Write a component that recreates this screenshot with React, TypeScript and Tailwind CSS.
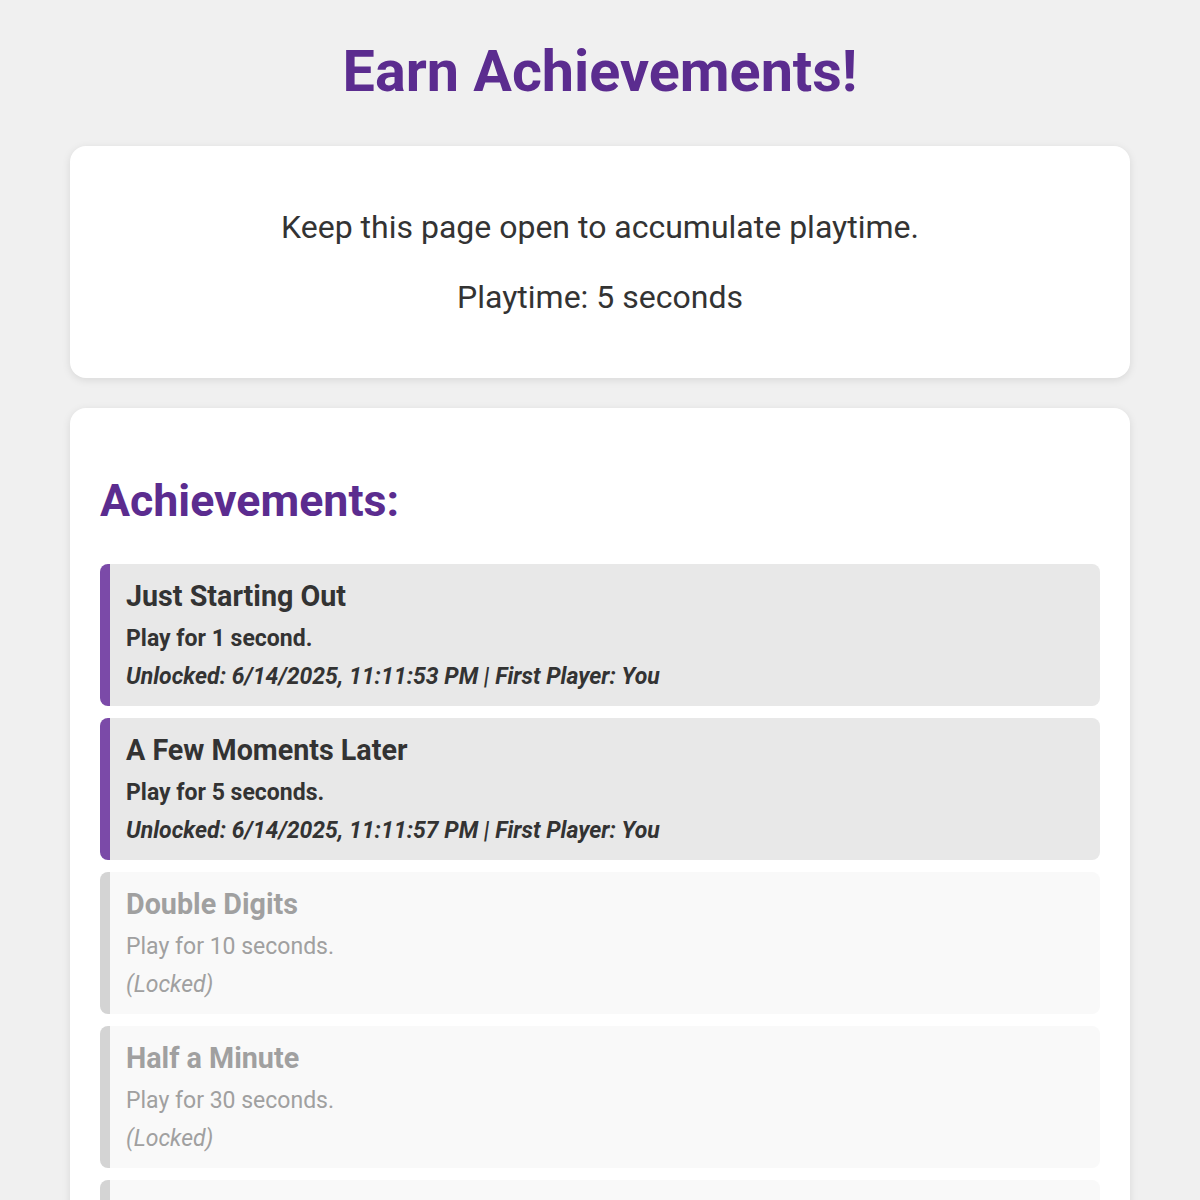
import React from "react";

type Ach = { title: string; desc: string; unlocked?: string };

const items: Ach[] = [
  { title: "Just Starting Out", desc: "Play for 1 second.", unlocked: "6/14/2025, 11:11:53 PM" },
  { title: "A Few Moments Later", desc: "Play for 5 seconds.", unlocked: "6/14/2025, 11:11:57 PM" },
  { title: "Double Digits", desc: "Play for 10 seconds." },
  { title: "Half a Minute", desc: "Play for 30 seconds." },
  { title: "A Full Minute", desc: "Play for 60 seconds." },
];

export default function App() {
  return (
    <div className="min-h-[1200px] bg-[#f0f0f0] text-[#333] px-[70px] pt-[38px] pb-10" style={{ fontFamily: "Roboto, 'Noto Sans', sans-serif" }}>
      <h1 className="text-center text-[57.5px] leading-[68px] font-bold text-[#5b2c8f]">Earn Achievements!</h1>
      <div className="mt-[40px] bg-white rounded-[16px] shadow-[0_2px_8px_rgba(0,0,0,0.1)] h-[232px] flex flex-col items-center justify-center gap-[30px]">
        <p className="text-[32px] leading-[40px]">Keep this page open to accumulate playtime.</p>
        <p className="text-[32px] leading-[40px]">Playtime: 5 seconds</p>
      </div>
      <div className="mt-[30px] bg-white rounded-[16px] shadow-[0_2px_8px_rgba(0,0,0,0.1)] px-[30px] pt-[68px] pb-[30px]">
        <h2 className="text-[44.7px] leading-[50px] font-bold text-[#5b2c8f]">Achievements:</h2>
        <div className="mt-[38px] flex flex-col gap-[12px]">
          {items.map((a) => {
            const u = !!a.unlocked;
            return (
              <div
                key={a.title}
                className={
                  u
                    ? "h-[142px] rounded-[8px] border-l-[10px] border-[#7b4aa8] bg-[#e8e8e8] pl-[16px] pt-[14px]"
                    : "h-[142px] rounded-[8px] border-l-[10px] border-[#d4d4d4] bg-[#f9f9f9] pl-[16px] pt-[14px] text-[#a0a0a0]"
                }
              >
                <div className="text-[28.7px] leading-[36px] font-bold">{a.title}</div>
                <div className={u ? "mt-[6px] text-[23px] leading-[38px] font-bold" : "mt-[6px] text-[23px] leading-[38px]"}>{a.desc}</div>
                <div className={u ? "text-[23px] leading-[38px] font-bold italic" : "text-[23px] leading-[38px] italic"}>
                  {u ? `Unlocked: ${a.unlocked} | First Player: You` : "(Locked)"}
                </div>
              </div>
            );
          })}
        </div>
      </div>
    </div>
  );
}
